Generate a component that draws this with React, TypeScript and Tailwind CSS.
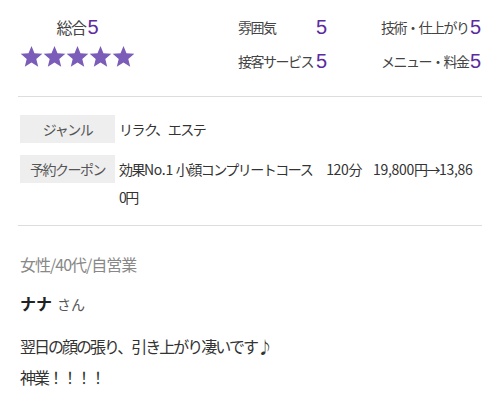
import React from "react"

const jp = { fontFamily: '"Noto Sans CJK JP", "Noto Sans", sans-serif' }
const num = { fontFamily: '"Liberation Sans", Arial, sans-serif' }

function Star() {
  return (
    <svg viewBox="0 0 24 24" className="w-[23px] h-[23px]">
      <polygon
        points="12,1 15.1,8.6 23.3,9.2 17,14.5 19,22.6 12,18.2 5,22.6 7,14.5 0.7,9.2 8.9,8.6"
        fill="#7b5cb8"
      />
    </svg>
  )
}

function Score({ label, width }: { label: string; width: string }) {
  return (
    <div className={`flex items-center justify-between h-[34px] ${width}`}>
      <span className="text-[14px] tracking-[-1.5px] text-[#444]">{label}</span>
      <span className="text-[20px] text-[#5b2b9f]" style={num}>5</span>
    </div>
  )
}

export default function App() {
  return (
    <div className="w-[500px] h-[400px] bg-white overflow-hidden" style={jp}>
      {/* 評価 */}
      <div className="flex h-[96px] pt-[10px] px-5">
        <div className="w-[115px] flex flex-col items-center">
          <div className="h-[34px] flex items-center">
            <span className="text-[16px] tracking-[-1.5px] text-[#444]">総合</span>
            <span className="text-[20px] text-[#5b2b9f] ml-[2px]" style={num}>5</span>
          </div>
          <div className="flex mt-[1px]">
            <Star />
            <Star />
            <Star />
            <Star />
            <Star />
          </div>
        </div>
        <div className="ml-[103px] grid grid-cols-[89px_100px] gap-x-[54px] content-start">
          <Score label="雰囲気" width="w-[89px]" />
          <Score label="技術・仕上がり" width="w-[100px]" />
          <Score label="接客サービス" width="w-[89px]" />
          <Score label="メニュー・料金" width="w-[100px]" />
        </div>
      </div>
      <div className="mx-[18px] h-px bg-[#dddddd]" />

      {/* ジャンル・クーポン */}
      <div className="px-5 pt-[18px] pb-[14px] flex flex-col gap-[12px]">
        <div className="flex">
          <div className="w-[95px] h-[28px] shrink-0 bg-[#eeeeee] flex items-center justify-center text-[14px] tracking-[-1.5px] text-[#555]">
            ジャンル
          </div>
          <div className="pl-[4px] text-[14px] leading-[28px] tracking-[-1.5px] text-[#333]">リラク、エステ</div>
        </div>
        <div className="flex">
          <div className="w-[95px] h-[28px] shrink-0 bg-[#eeeeee] flex items-center justify-center text-[14px] tracking-[-1.5px] text-[#555]">
            予約クーポン
          </div>
          <div className="pl-[4px] text-[14px] leading-[28px] tracking-[-1.5px] text-[#333]">
            <div className="whitespace-nowrap">
              効果<span className="tracking-[-0.3px]">No.1 </span>小顔コンプリートコース
              <span className="ml-[14px] tracking-[-0.3px]">120</span>分
              <span className="ml-[12px] tracking-[-0.3px]">19,800</span>円→
              <span className="tracking-[-0.3px]">13,86</span>
            </div>
            <div>0円</div>
          </div>
        </div>
      </div>
      <div className="mx-[18px] h-px bg-[#dddddd]" />

      {/* 口コミ */}
      <div className="px-5 pt-[26px]">
        <div className="text-[16px] leading-[24px] tracking-[-1px] text-[#888]">女性/40代/自営業</div>
        <div className="mt-[15px] leading-[24px]">
          <span className="text-[16px] font-bold text-[#222]">ナナ</span>
          <span className="ml-[5px] text-[14px] text-[#555]">さん</span>
        </div>
        <div className="mt-[15px] text-[16px] leading-[31px] tracking-[-2px] text-[#333]">
          <div>翌日の顔の張り、引き上がり凄いです♪</div>
          <div>神業！！！！</div>
        </div>
      </div>
    </div>
  )
}
